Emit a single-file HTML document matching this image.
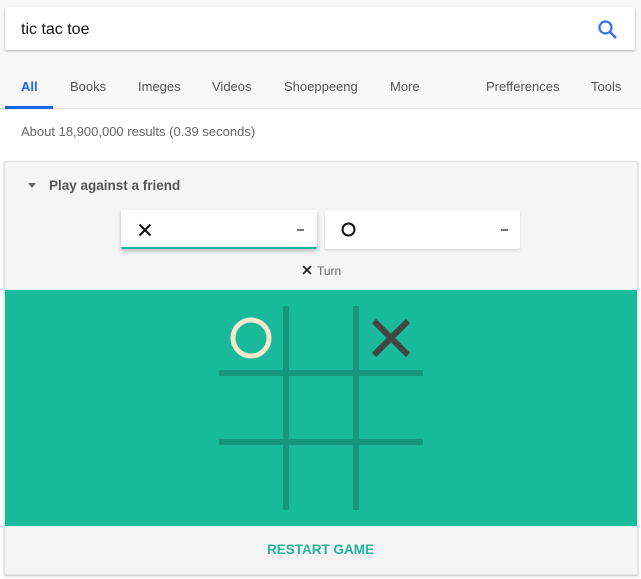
<!DOCTYPE html>
<html><head><style>
body{margin:0;width:641px;height:579px;background:#fff;font-family:"Liberation Sans",Arial,sans-serif;position:relative;overflow:hidden}
.top{position:absolute;left:0;top:0;width:641px;height:108px;background:#f8f8f8;border-bottom:1px solid #e6e6e6}
.search{position:absolute;left:5px;top:7px;width:630px;height:43px;background:#fff;box-shadow:0 1px 2px rgba(0,0,0,.3);border-radius:2px}
.search span{position:absolute;left:16px;top:14px;font-size:16px;color:#111}
.tab{position:absolute;top:79px;font-size:13px;color:#555}
.ul{position:absolute;left:5px;top:106px;width:48px;height:3px;background:#1a64e6}
.res{position:absolute;left:21px;top:124px;font-size:13px;color:#666}
.card{position:absolute;left:4px;top:161px;width:632px;height:412px;background:#f5f5f5;border:1px solid #e2e2e2;box-shadow:0 1px 2px rgba(0,0,0,.25)}
.ttl{position:absolute;left:49px;top:178px;font-size:13.5px;color:#555;font-weight:bold}
.box{position:absolute;top:210px;height:39px;background:#fff;border-radius:2px;box-shadow:0 1px 2px rgba(0,0,0,.15)}
.board{position:absolute;left:5px;top:290px;width:632px;height:236px;background:#19b99c}
.restart{position:absolute;left:0;width:641px;top:542px;text-align:center;font-size:13.5px;font-weight:bold;color:#1fb59a}
</style></head><body>
<div class="top"></div>
<div class="search"><span>tic tac toe</span>
<svg style="position:absolute;left:592px;top:12px" width="22" height="22" viewBox="0 0 22 22"><circle cx="8.5" cy="8.5" r="6" fill="none" stroke="#3b73e4" stroke-width="2.2"/><line x1="13" y1="13" x2="19" y2="19" stroke="#3b73e4" stroke-width="2.6"/></svg></div>
<div class="tab" style="left:21px;color:#1a64e6;font-weight:bold">All</div>
<div class="tab" style="left:70px">Books</div>
<div class="tab" style="left:138px">Imeges</div>
<div class="tab" style="left:212px">Videos</div>
<div class="tab" style="left:284px">Shoeppeeng</div>
<div class="tab" style="left:390px">More</div>
<div class="tab" style="left:486px">Prefferences</div>
<div class="tab" style="left:591px">Tools</div>
<div class="ul"></div>
<div class="res">About 18,900,000 results (0.39 seconds)</div>
<div class="card"></div>
<svg style="position:absolute;left:28px;top:183px" width="9" height="6"><polygon points="0,0 8,0 4,5" fill="#666"/></svg>
<div class="ttl">Play against a friend</div>
<div class="box" style="left:121px;width:196px;border-bottom:2px solid #1fb59a;height:37px;box-shadow:0 2px 4px rgba(0,0,0,.25)">
<svg style="position:absolute;left:17px;top:13px" width="14" height="14"><path d="M1.5 1.5L12.5 12.5M12.5 1.5L1.5 12.5" stroke="#111" stroke-width="2"/></svg>
<div style="position:absolute;left:176px;top:19px;width:7px;height:2px;background:#777"></div></div>
<div class="box" style="left:325px;width:195px">
<svg style="position:absolute;left:16px;top:12px" width="15" height="15"><circle cx="7.5" cy="7.5" r="6" fill="none" stroke="#111" stroke-width="2"/></svg>
<div style="position:absolute;left:176px;top:19px;width:7px;height:2px;background:#777"></div></div>
<svg style="position:absolute;left:302px;top:265px" width="10" height="10"><path d="M1 1L9 9M9 1L1 9" stroke="#222" stroke-width="1.8"/></svg>
<div style="position:absolute;left:317px;top:264px;font-size:12px;color:#666">Turn</div>
<div class="board"></div>
<svg style="position:absolute;left:0;top:0" width="641" height="579">
<g fill="#16977d"><rect x="283" y="306" width="6" height="204"/><rect x="353" y="306" width="6" height="204"/><rect x="219" y="370" width="204" height="6"/><rect x="219" y="439" width="204" height="6"/></g>
<circle cx="251" cy="338" r="18" fill="none" stroke="#f2e8cc" stroke-width="5"/>
<path d="M374 321L408 355M408 321L374 355" stroke="#444" stroke-width="6"/>
</svg>
<div class="restart">RESTART GAME</div>
</body></html>
